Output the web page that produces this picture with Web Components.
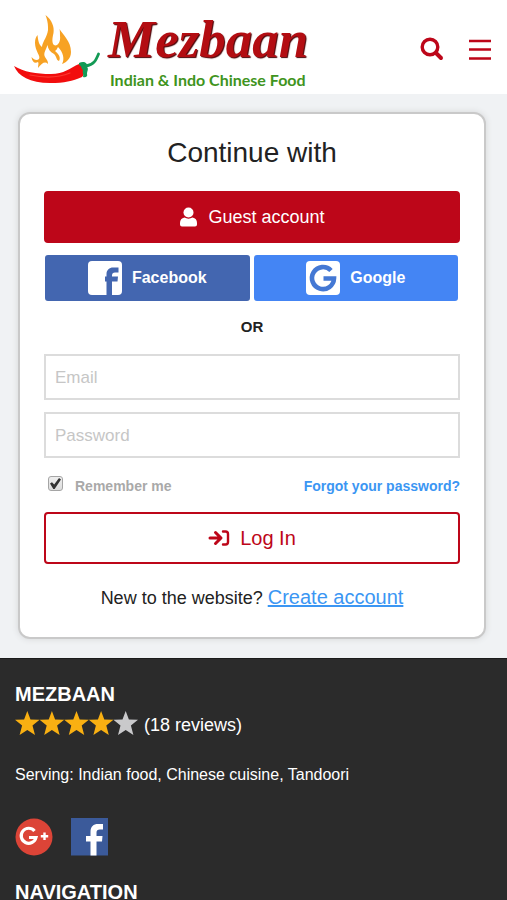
<!DOCTYPE html>
<html lang="en">
<head>
<meta charset="utf-8">
<meta name="viewport" content="width=device-width, initial-scale=1">
<title>Mezbaan – Log In</title>
<style>
html { background: #2b2b2b; }
body { margin: 0; font-family: "Liberation Sans", Arial, sans-serif; color: #222; background: #f0f2f4; --brand: #bd0619; --link: #3b96f3; }
</style>
</head>
<body>
<mz-page></mz-page>
<script>
const define = (name, html) => customElements.define(name, class extends HTMLElement {
  constructor() {
    super();
    const t = document.createElement('template');
    t.innerHTML = html;
    this.attachShadow({ mode: 'open' }).append(t.content.cloneNode(true));
  }
});

define('mz-logo', `
<style>
:host { display: block; }
a { display: flex; align-items: center; gap: 8px; text-decoration: none; }
svg { display: block; width: 88px; height: 72px; }
.words { display: flex; flex-direction: column; }
.name { font: italic bold 53px/62px "Liberation Serif", serif; color: #b30d12; text-shadow: 1px 1px 1px #4a0306; }
.tag { font: bold 16px/20px Lato, sans-serif; color: #3f9420; padding-left: 2px; white-space: nowrap; }
</style>
<a href="#home" aria-label="Mezbaan home">
<svg viewBox="12 14 88 72" aria-hidden="true">
<path d="M45.500 16C52 21 54.500 28 53.500 34C52 40 52 44 54 46C57 48 61 43 60 37C60 34 60 32 59.500 30C63 36 71 42 71 53C71 59 67 63 62 65C65 60 63 53 58 48C57 50 56.500 51 55 52C59 55 61 59 59 62C56 61 57 58 54 55C50 53 48 50 47.500 46C46 51 43 54 45 58C47 61 48 62 48 65C45 62 42 64 38 69C38 66 39 64 38 63C35 65 32 63 31.500 58C34 61 37 62 39 60C41 57 35 52 35 44C35 40 36 38 37.500 36C38 41 39 46 42 48C42 43 49 36 48 28C48 24 47 20 45.500 16Z" fill="#f7a224"/>
<path d="M14 67C24 73 36 75 51 75C64 75 70 69 79 65C84 67 86 74 82 78C72 82 65 84 50 84C30 84 18 77 14 67Z" fill="#f20d0d"/>
<path d="M30 76C44 79 58 79 70 74" fill="none" stroke="#fb3a30" stroke-width="1.200" stroke-linecap="round"/>
<path d="M79 64C83 62 88 63 87 68C89 70 87 72 87 75C88 77 86 79 83 78C84 75 82 74 83 71C81 70 82 67 79 66Z" fill="#139a55"/>
<path d="M86 67C94 66 96 61 98.500 55" fill="none" stroke="#139a55" stroke-width="2.800" stroke-linecap="round"/>
</svg>
<span class="words"><span class="name">Mezbaan</span><span class="tag">Indian &amp; Indo Chinese Food</span></span>
</a>`);

define('mz-header', `
<style>
:host { display: block; background: #fff; }
header { display: flex; align-items: center; justify-content: space-between; min-height: 94px; box-sizing: border-box; padding: 4px 15px 0 12px; }
nav { display: flex; gap: 22px; }
button { display: block; width: 26px; height: 26px; padding: 0; border: 0; background: none; color: var(--brand); }
svg { display: block; width: 26px; height: 26px; }
</style>
<header>
<mz-logo></mz-logo>
<nav>
<button aria-label="Search"><svg viewBox="0 0 26 26" fill="none" stroke="currentColor"><circle cx="12" cy="11" r="7.800" stroke-width="3.400"/><path d="M18 17L23 22" stroke-width="4" stroke-linecap="round"/></svg></button>
<button aria-label="Menu"><svg viewBox="0 0 26 26" fill="none" stroke="currentColor" stroke-width="2.400"><path d="M3 5H25M3 13.500H25M3 22.500H25"/></svg></button>
</nav>
</header>`);

define('mz-button', `
<style>
:host { display: block; --bg: var(--brand); --fg: #fff; --edge: var(--brand); }
:host([kind=outline]) { --bg: #fff; --fg: var(--brand); }
button { display: flex; align-items: center; justify-content: center; gap: 10px; width: 100%; height: 52px; box-sizing: border-box; padding: 0; border: 2px solid var(--edge); border-radius: 4px; background: var(--bg); color: var(--fg); font: 18px/24px "Liberation Sans", Arial, sans-serif; }
:host([kind=outline]) button { font-size: 20px; }
:host([kind=facebook]) { --bg: #4366b0; --edge: #4366b0; }
:host([kind=google]) { --bg: #4485f4; --edge: #4485f4; }
:host([kind=facebook]) button, :host([kind=google]) button { height: 46px; font-size: 16px; font-weight: bold; border-radius: 3px; }
</style>
<button type="button"><slot name="icon"></slot><span><slot></slot></span></button>`);

customElements.define('mz-field', class extends HTMLElement {
  constructor() {
    super();
    this.attachShadow({ mode: 'open' }).innerHTML = `
<style>
:host { display: block; }
input { display: block; width: 100%; height: 46px; box-sizing: border-box; padding: 2px 9px 0; border: 2px solid #dcdcdc; border-radius: 0; background: #fff; color: #222; font: 17px/24px "Liberation Sans", Arial, sans-serif; }
input::placeholder { color: #c6c6c6; opacity: 1; }
</style>
<input>`;
  }
  connectedCallback() {
    const input = this.shadowRoot.querySelector('input');
    input.type = this.getAttribute('type');
    input.placeholder = this.getAttribute('label');
    input.setAttribute('aria-label', this.getAttribute('label'));
  }
});

define('mz-login', `
<style>
:host { display: block; padding: 18px 21px 19px 18px; }
form { display: flex; flex-direction: column; gap: 12px; padding: 22px 24px 26px; background: #fff; border: 2px solid #c9c9c9; border-radius: 12px; box-shadow: 0 0 6px #d4d6d7; }
h1 { margin: 0 0 9px; font-size: 28px; line-height: 34px; font-weight: normal; text-align: center; }
.social { display: grid; grid-template-columns: 1fr 1fr; gap: 4px; padding: 0 2px 0 1px; }
.or { text-align: center; font-weight: bold; font-size: 15px; line-height: 28px; padding-bottom: 1px; }
.row { display: flex; justify-content: space-between; align-items: center; font-size: 14px; line-height: 20px; font-weight: bold; padding: 6px 0 4px 4px; }
label { display: flex; gap: 12px; color: #a9a9a9; }
.row input { appearance: none; width: 15px; height: 15px; margin: 0; border: 1px solid #a5a5a5; border-radius: 3px; background: linear-gradient(#eee, #ddd); display: grid; place-items: center; }
.row input:checked::before { content: ""; width: 11px; height: 11px; background: #333; clip-path: polygon(0 50%, 18% 38%, 38% 58%, 82% 0, 100% 14%, 42% 100%, 30% 100%); }
.row a { color: var(--link); text-decoration: none; }
p { margin: 8px 0 0; text-align: center; font-size: 18px; line-height: 26px; }
p a { color: var(--link); font-size: 20px; }
svg { display: block; }
</style>
<form>
<h1>Continue with</h1>
<mz-button><svg slot="icon" width="19" height="20" viewBox="0 0 19 20" fill="#fff" aria-hidden="true"><circle cx="9.500" cy="5.500" r="5"/><path d="M5.500 10.500C8 12 11 12 13.500 10.500C16.500 11 18 13 18 16V17.500Q18 19.500 16 19.500H3Q1 19.500 1 17.500V16C1 13 2.500 11 5.500 10.500Z"/></svg>Guest account</mz-button>
<div class="social">
<mz-button kind="facebook"><svg slot="icon" width="34" height="34" viewBox="0 0 34 34" aria-hidden="true"><rect width="34" height="34" rx="4" fill="#fff"/><path d="M18.500 34V20.500H17V15.500H18.500V13C18.500 9 21.500 6.500 25 6.500H30.500V11.500H27C25 11.500 24 12.500 24 14.500V15.500H30L29.500 20.500H24V34Z" fill="#4366b0"/></svg>Facebook</mz-button>
<mz-button kind="google"><svg slot="icon" width="34" height="34" viewBox="0 0 34 34" aria-hidden="true"><rect width="34" height="34" rx="4" fill="#fff"/><path d="M25 9.500A11 11 0 1 0 28 17.500H17.500" fill="none" stroke="#4478d4" stroke-width="4.600"/></svg>Google</mz-button>
</div>
<div class="or">OR</div>
<mz-field type="email" label="Email"></mz-field>
<mz-field type="password" label="Password"></mz-field>
<div class="row"><label><input type="checkbox" checked><span>Remember me</span></label><a href="#forgot">Forgot your password?</a></div>
<mz-button kind="outline"><svg slot="icon" width="22" height="18" viewBox="0 0 22 18" fill="none" stroke="#bd0619" stroke-width="3" stroke-linecap="round" stroke-linejoin="round" aria-hidden="true"><path d="M2 9H12M7.500 3.500L13 9L7.500 14.500"/><path d="M15 2.500H17.500Q20 2.500 20 5V13Q20 15.500 17.500 15.500H15" stroke-width="2.400"/></svg>Log In</mz-button>
<p>New to the website? <a href="#create">Create account</a></p>
</form>`);

const star = (i) => `<path transform="translate(${i * 24.6})" d="M12.300 0L15.500 8.500L24.600 8.800L17.500 14.500L20 24L12.300 19L4.600 24L7.100 14.500L0 8.800L9.100 8.500Z" fill="${i < 4 ? '#f9b012' : '#c9c9cb'}"/>`;

define('mz-stars', `
<style>
:host { display: flex; align-items: center; gap: 6px; font-size: 18px; line-height: 28px; }
svg { display: block; width: 123px; height: 25px; }
span { padding-top: 4px; }
</style>
<svg viewBox="0 0 123 25" role="img" aria-label="4 of 5 stars">${[0, 1, 2, 3, 4].map(star).join('')}</svg><span><slot></slot></span>`);

define('mz-footer', `
<style>
:host { display: block; background: #2b2b2b; color: #fff; border-top: 1px solid #1b1b1b; }
footer { padding: 22px 15px 20px; }
h2 { margin: 0; font-size: 20px; line-height: 26px; }
p { margin: 24px 0 0; font-size: 16px; line-height: 24px; }
.social { display: flex; gap: 18px; margin: 31px 0 23px; }
a, svg { display: block; }
</style>
<footer>
<h2>MEZBAAN</h2>
<mz-stars>(18 reviews)</mz-stars>
<p>Serving: Indian food, Chinese cuisine, Tandoori</p>
<div class="social">
<a href="#google" aria-label="Google Plus"><svg width="38" height="38" viewBox="0 0 38 38"><circle cx="19" cy="19" r="18.500" fill="#dc4437"/><path d="M19.500 13A7.500 7.500 0 1 0 21 19.500H14" fill="none" stroke="#fff" stroke-width="3.200"/><path d="M29.500 14.500V22M25.800 18.200H33.200" stroke="#fff" stroke-width="2.400"/></svg></a>
<a href="#facebook" aria-label="Facebook"><svg width="37" height="38" viewBox="0 0 37 38"><rect width="37" height="37.500" fill="#3b5a9a"/><path d="M19.500 37.500V23.500H15V18H19.500V14C19.500 8.500 22.500 6 27 6H32V11.500H29C26.500 11.500 25.500 12.500 25.500 14.500V18H31.500L31 23.500H25.500V37.500Z" fill="#fff"/></svg></a>
</div>
<h2>NAVIGATION</h2>
</footer>`);

define('mz-page', `
<style>:host { display: block; }</style>
<mz-header></mz-header><main><mz-login></mz-login></main><mz-footer></mz-footer>`);
</script>
</body>
</html>
